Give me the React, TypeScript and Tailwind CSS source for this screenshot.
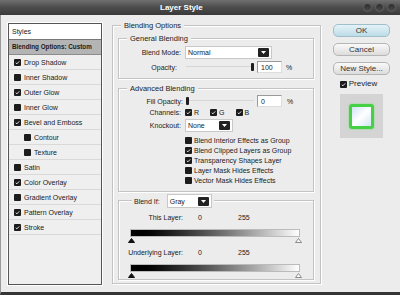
import type { ReactNode } from 'react';

const styleRows: { label: string; on: boolean; sub?: boolean }[] = [
  { label: 'Drop Shadow', on: true },
  { label: 'Inner Shadow', on: false },
  { label: 'Outer Glow', on: true },
  { label: 'Inner Glow', on: false },
  { label: 'Bevel and Emboss', on: true },
  { label: 'Contour', on: false, sub: true },
  { label: 'Texture', on: false, sub: true },
  { label: 'Satin', on: false },
  { label: 'Color Overlay', on: true },
  { label: 'Gradient Overlay', on: false },
  { label: 'Pattern Overlay', on: true },
  { label: 'Stroke', on: true },
];

const knockoutOpts = [
  { label: 'Blend Interior Effects as Group', on: false },
  { label: 'Blend Clipped Layers as Group', on: true },
  { label: 'Transparency Shapes Layer', on: true },
  { label: 'Layer Mask Hides Effects', on: false },
  { label: 'Vector Mask Hides Effects', on: false },
];

function Check({ on }: { on: boolean }) {
  return (
    <span className="w-[7px] h-[7px] shrink-0 rounded-[1px] bg-[#1c1c1c] flex items-center justify-center">
      {on && (
        <svg width="5" height="5" viewBox="0 0 5 5">
          <path d="M0.8 2.8 L1.9 3.8 L4.2 1.4" stroke="#fff" strokeWidth="0.9" fill="none" />
        </svg>
      )}
    </span>
  );
}

function Group({ title, className, children }: { title: string; className: string; children?: ReactNode }) {
  return (
    <div className={`border border-[#c3c3c3] shadow-[inset_1px_1px_0_#fff,1px_1px_0_#fff] ${className}`}>
      <div className="-mt-[5px] ml-[8px] px-[3px] w-fit bg-[#ececec] leading-[9px] text-[7.5px] text-[#222]">{title}</div>
      {children}
    </div>
  );
}

function DropBtn() {
  return (
    <span className="w-[11px] h-[9px] rounded-[1px] bg-[#222] flex items-center justify-center">
      <svg width="5" height="3" viewBox="0 0 5 3">
        <path d="M0 0 H5 L2.5 3 Z" fill="#fff" />
      </svg>
    </span>
  );
}

function Select({ value, className }: { value: string; className: string }) {
  return (
    <div className={`h-[13px] bg-white border border-[#c8c8c8] flex items-center pl-[2px] pr-[2px] ${className}`}>
      <span className="flex-1">{value}</span>
      <DropBtn />
    </div>
  );
}

function Slider({ pos }: { pos: 'start' | 'end' }) {
  return (
    <div className={`w-[68px] h-[12px] flex items-center ${pos === 'end' ? 'justify-end' : 'justify-start'} bg-[linear-gradient(#0000_5px,#d6d6d6_5px,#d6d6d6_6px,#0000_6px)]`}>
      <span className="w-[3px] h-[8px] rounded-[1px] bg-[#1c1c1c]" />
    </div>
  );
}

function Field({ value }: { value: string }) {
  return (
    <div className="w-[25px] h-[12px] bg-white border border-[#9a9a9a] border-r-[#ddd] border-b-[#ddd] pl-[3px] flex items-center">
      {value}
    </div>
  );
}

function Marker({ dark }: { dark: boolean }) {
  return (
    <svg width="7" height="5" viewBox="0 0 7 5">
      <path d="M0.5 4.5 L3.5 0.5 L6.5 4.5 Z" fill={dark ? '#111' : '#fff'} stroke={dark ? '#111' : '#888'} strokeWidth="1" />
    </svg>
  );
}

function RangeBar({ label }: { label: string }) {
  return (
    <div className="flex flex-col">
      <div className="flex items-center h-[10px]">
        <span className="w-[64px] text-right">{label}</span>
        <span className="ml-[15px] w-[40px]">0</span>
        <span>255</span>
      </div>
      <div className="ml-[11px] mt-[7px] w-[170px] h-[8px] border border-[#bbb] bg-gradient-to-r from-black to-white" />
      <div className="ml-[9px] w-[174px] flex justify-between mt-[1px]">
        <Marker dark />
        <Marker dark={false} />
      </div>
    </div>
  );
}

function Button({ label, primary }: { label: string; primary?: boolean }) {
  return (
    <div
      className={`w-[57px] h-[13px] rounded-[5px] border flex items-center justify-center text-[8px] text-[#333] ${
        primary
          ? 'border-[#9fbfca] bg-gradient-to-b from-[#e4f3f8] to-[#bcdce7]'
          : 'border-[#b5b5b5] bg-gradient-to-b from-[#fafafa] to-[#dcdcdc]'
      }`}
    >
      {label}
    </div>
  );
}

export default function App() {
  return (
    <div className="w-[400px] h-[295px] overflow-hidden flex flex-col bg-[#ececec] font-['Liberation_Sans',Arial,sans-serif] text-[7px] text-[#1a1a1a] leading-none">
      {/* Title bar */}
      <div className="h-[15px] shrink-0 flex items-center bg-gradient-to-b from-[#707070] via-[#4c4c4c] to-[#393939]">
        <span className="pl-[160px] text-white font-bold text-[8px]">Layer Style</span>
        <div className="ml-auto flex gap-[3px] pr-[4px]">
          {[0, 1, 2].map((i) => (
            <span key={i} className="w-[9px] h-[9px] rounded-full bg-gradient-to-b from-[#2e2e2e] to-[#4a4a4a] border border-[#5e5e5e]" />
          ))}
        </div>
      </div>

      <div className="flex-1 flex border-b-[3px] border-[#353535] border-l border-l-[#9a9a9a]">
        {/* Styles list */}
        <div className="ml-[7px] mt-[8px] w-[94px] h-[262px] border border-[#555] bg-[#efefef] flex flex-col shadow-[0_0_0_1px_#fff]">
          <div className="h-[16px] shrink-0 bg-white border-b border-[#777] flex items-center pl-[3px]">Styles</div>
          <div className="h-[15px] shrink-0 bg-[#b4b4b4] border-b border-[#8c8c8c] flex items-center pl-[3px] font-bold text-[6.3px] whitespace-nowrap">
            Blending Options: Custom
          </div>
          {styleRows.map((r) => (
            <div
              key={r.label}
              className={`h-[15px] shrink-0 border-b border-[#d9d9d9] flex items-center gap-[3px] ${r.sub ? 'pl-[15px]' : 'pl-[5px]'}`}
            >
              <Check on={r.on} />
              <span>{r.label}</span>
            </div>
          ))}
        </div>

        {/* Blending Options */}
        <Group title="Blending Options" className="ml-[10px] mt-[10px] w-[209px] h-[259px] flex flex-col">
          <Group title="General Blending" className="ml-[5px] mt-[8px] w-[196px] h-[41px] flex flex-col">
            <div className="flex items-center mt-[3px] h-[13px]">
              <span className="w-[62px] text-right">Blend Mode:</span>
              <Select value="Normal" className="ml-[4px] w-[87px]" />
            </div>
            <div className="flex items-center mt-[2px] h-[12px]">
              <span className="w-[58px] text-right">Opacity:</span>
              <span className="ml-[9px]">
                <Slider pos="end" />
              </span>
              <span className="ml-[3px]">
                <Field value="100" />
              </span>
              <span className="ml-[4px]">%</span>
            </div>
          </Group>

          <Group title="Advanced Blending" className="ml-[5px] mt-[9px] w-[196px] h-[104px] flex flex-col">
            <div className="flex items-center mt-[2px] h-[12px]">
              <span className="w-[64px] text-right">Fill Opacity:</span>
              <span className="ml-[3px]">
                <Slider pos="start" />
              </span>
              <span className="ml-[3px]">
                <Field value="0" />
              </span>
              <span className="ml-[5px]">%</span>
            </div>
            <div className="flex items-center h-[11px]">
              <span className="w-[62px] text-right">Channels:</span>
              <span className="ml-[4px] flex items-center gap-[2px]">
                <Check on />R
              </span>
              <span className="ml-[11px] flex items-center gap-[2px]">
                <Check on />G
              </span>
              <span className="ml-[11px] flex items-center gap-[2px]">
                <Check on />B
              </span>
            </div>
            <div className="flex items-center mt-[1px] h-[13px]">
              <span className="w-[62px] text-right">Knockout:</span>
              <Select value="None" className="ml-[4px] w-[48px]" />
            </div>
            <div className="flex flex-col mt-[3px] ml-[66px]">
              {knockoutOpts.map((o) => (
                <div key={o.label} className="h-[10px] flex items-center gap-[2px]">
                  <Check on={o.on} />
                  <span>{o.label}</span>
                </div>
              ))}
            </div>
          </Group>

          <div className="ml-[5px] mt-[8px] w-[196px] h-[80px] border border-[#c3c3c3] shadow-[inset_1px_1px_0_#fff,1px_1px_0_#fff] flex flex-col">
            <div className="-mt-[7px] ml-[13px] px-[2px] w-fit bg-[#ececec] flex items-center gap-[7px] h-[14px]">
              <span>Blend If:</span>
              <Select value="Gray" className="w-[45px] h-[14px]" />
            </div>
            <div className="mt-[4px]">
              <RangeBar label="This Layer:" />
            </div>
            <div className="mt-[4px]">
              <RangeBar label="Underlying Layer:" />
            </div>
          </div>
        </Group>

        {/* Buttons */}
        <div className="ml-[12px] mt-[9px] flex flex-col items-center w-[57px]">
          <Button label="OK" primary />
          <div className="mt-[6px]">
            <Button label="Cancel" />
          </div>
          <div className="mt-[6px]">
            <Button label="New Style..." />
          </div>
          <div className="mt-[5px] flex items-center gap-[2px] text-[8px] text-[#222] -ml-[6px]">
            <Check on />
            <span>Preview</span>
          </div>
          <div className="mt-[6px] w-[43px] h-[44px] bg-[#d4d4d4] flex items-center justify-center">
            <div className="w-[25px] h-[25px] rounded-[3px] border-[3px] border-[#45d045] bg-gradient-to-br from-[#cfe3f3] via-white to-[#d3e6f5] shadow-[0_0_2px_#6ee06e]" />
          </div>
        </div>
      </div>
    </div>
  );
}
